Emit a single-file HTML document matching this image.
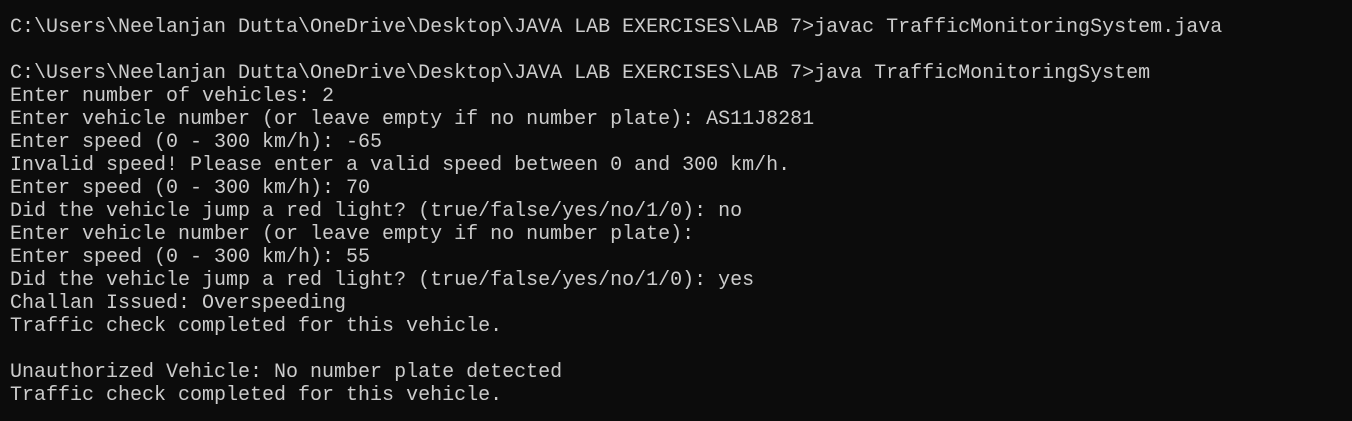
<!DOCTYPE html>
<html><head><meta charset="utf-8"><style>
html,body{margin:0;padding:0;background:#0c0c0c;width:1352px;height:421px;overflow:hidden}
pre{margin:0;position:absolute;left:10px;top:16px;font-family:"Liberation Mono",monospace;font-size:20px;line-height:23px;color:#cccccc}
</style></head><body><pre>C:\Users\Neelanjan Dutta\OneDrive\Desktop\JAVA LAB EXERCISES\LAB 7>javac TrafficMonitoringSystem.java

C:\Users\Neelanjan Dutta\OneDrive\Desktop\JAVA LAB EXERCISES\LAB 7>java TrafficMonitoringSystem
Enter number of vehicles: 2
Enter vehicle number (or leave empty if no number plate): AS11J8281
Enter speed (0 - 300 km/h): -65
Invalid speed! Please enter a valid speed between 0 and 300 km/h.
Enter speed (0 - 300 km/h): 70
Did the vehicle jump a red light? (true/false/yes/no/1/0): no
Enter vehicle number (or leave empty if no number plate):
Enter speed (0 - 300 km/h): 55
Did the vehicle jump a red light? (true/false/yes/no/1/0): yes
Challan Issued: Overspeeding
Traffic check completed for this vehicle.

Unauthorized Vehicle: No number plate detected
Traffic check completed for this vehicle.</pre></body></html>
